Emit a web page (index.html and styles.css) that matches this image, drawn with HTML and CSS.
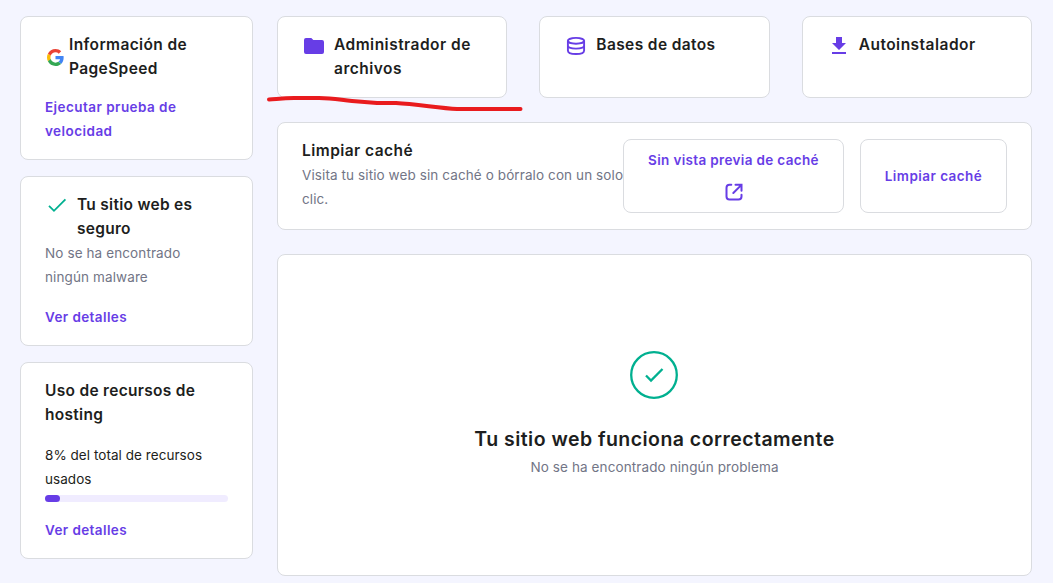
FILE: index.html
```
<!DOCTYPE html>
<html lang="es">
<head>
<meta charset="utf-8">
<title>Panel de hosting</title>
<link rel="stylesheet" href="styles.css">
</head>
<body>
<div class="dashboard">
  <aside class="sidebar">
    <section class="card pagespeed">
      <div class="heading heading-google">
        <svg class="google" viewBox="0 0 48 48"><path fill="#EA4335" d="M24 9.5c3.54 0 6.71 1.22 9.21 3.6l6.85-6.85C35.9 2.38 30.47 0 24 0 14.62 0 6.51 5.38 2.56 13.22l7.98 6.19C12.43 13.72 17.74 9.5 24 9.5z"/><path fill="#4285F4" d="M46.98 24.55c0-1.57-.15-3.09-.38-4.55H24v9.02h12.94c-.58 2.96-2.26 5.48-4.78 7.18l7.73 6c4.51-4.18 7.09-10.36 7.09-17.65z"/><path fill="#FBBC05" d="M10.53 28.59A14.5 14.5 0 0 1 9.77 24c0-1.6.27-3.14.76-4.59l-7.98-6.19A24 24 0 0 0 0 24c0 3.88.92 7.54 2.56 10.78l7.97-6.19z"/><path fill="#34A853" d="M24 48c6.48 0 11.93-2.13 15.89-5.81l-7.73-6c-2.15 1.45-4.92 2.3-8.16 2.3-6.26 0-11.57-4.22-13.47-9.91l-7.98 6.19C6.51 42.62 14.62 48 24 48z"/></svg>
        <h2 class="title">Información de<br>PageSpeed</h2>
      </div>
      <a class="link">Ejecutar prueba de<br>velocidad</a>
    </section>
    <section class="card security">
      <div class="heading">
        <svg class="icon" viewBox="0 0 24 24" fill="none" stroke="#00b090" stroke-width="1.8"><path d="M4 12.8l5 5L20.4 6.3"/></svg>
        <h2 class="title">Tu sitio web es<br>seguro</h2>
      </div>
      <p class="muted">No se ha encontrado<br>ningún malware</p>
      <a class="link">Ver detalles</a>
    </section>
    <section class="card resources">
      <h2 class="title">Uso de recursos de<br>hosting</h2>
      <p class="usage">8% del total de recursos<br>usados</p>
      <div class="meter"><div class="meter-fill" style="width: 8%"></div></div>
      <a class="link">Ver detalles</a>
    </section>
  </aside>
  <main class="content">
    <div class="tiles">
      <section class="card tile">
        <svg class="icon" viewBox="0 0 24 24" fill="#673de6"><path d="M4 5h5.3l2 2H20a2 2 0 0 1 2 2v10a2 2 0 0 1-2 2H4a2 2 0 0 1-2-2V7a2 2 0 0 1 2-2z"/></svg>
        <h2 class="title wide">Administrador de<br>archivos</h2>
      </section>
      <section class="card tile">
        <svg class="icon" viewBox="0 0 24 24" fill="none" stroke="#673de6" stroke-width="1.9"><ellipse cx="12" cy="7.8" rx="8.1" ry="2.9"/><path d="M3.9 7.8v9.6c0 2.6 3.6 3.6 8.1 3.6s8.1-1 8.1-3.6V7.8M3.9 12.6c0 2.2 3.6 3 8.1 3s8.1-.8 8.1-3"/></svg>
        <h2 class="title">Bases de datos</h2>
      </section>
      <section class="card tile">
        <svg class="icon" viewBox="0 0 24 24" fill="#673de6"><path d="M9 4h6v6h4l-7 7-7-7h4zM5 19h14v2H5z"/></svg>
        <h2 class="title wide">Autoinstalador</h2>
      </section>
      <svg class="underline" viewBox="0 0 260 18" fill="none" stroke="#e91b1e" stroke-width="4" stroke-linecap="round" stroke-linejoin="round"><path d="M4 4.5C12 4 18 3 29 3H54C68 3 76 5 87 6L112 8H131C151 9 174 13 192 14H255.5"/></svg>
    </div>
    <section class="card cache">
      <div class="cache-text">
        <h2 class="title">Limpiar caché</h2>
        <p class="muted">Visita tu sitio web sin caché o bórralo con un solo<br>clic.</p>
      </div>
      <div class="actions">
        <button class="button preview">Sin vista previa de caché
          <svg class="icon" viewBox="0 0 24 24" fill="none" stroke="#673de6" stroke-width="2" stroke-linecap="round"><path d="M9.3 4.8H7.5a3 3 0 0 0-3 3v8.7a3 3 0 0 0 3 3h9a3 3 0 0 0 3-3V14.7M13.5 4.8H19.5V10.8M19.2 5.1L11.3 13"/></svg>
        </button>
        <button class="button clear">Limpiar caché</button>
      </div>
    </section>
    <section class="card status">
      <svg class="status-icon" viewBox="0 0 48 48" fill="none" stroke="#00b090" stroke-width="2.3"><circle cx="24" cy="24" r="22.8"/><path d="M16 24.5l5 5L32.5 18"/></svg>
      <h1 class="status-title">Tu sitio web funciona correctamente</h1>
      <p class="muted status-note">No se ha encontrado ningún problema</p>
    </section>
  </main>
</div>
</body>
</html>
```
FILE: styles.css
```
* { box-sizing: border-box; }
body {
  margin: 0;
  height: 583px;
  overflow: hidden;
  background: #f4f5ff;
  color: #1d1e20;
  font-family: Inter, "Noto Sans", sans-serif;
  font-size: 14px;
  line-height: 24px;
}
h1, h2, p { margin: 0; }
.dashboard {
  display: grid;
  grid-template-columns: 233px 755px;
  gap: 24px;
  padding: 16px 0 0 20px;
}
.sidebar { display: flex; flex-direction: column; gap: 16px; }
.content { display: flex; flex-direction: column; gap: 24px; }
.card {
  background: #fff;
  border: 1px solid #dadce0;
  border-radius: 8px;
  padding: 16px 24px;
  white-space: nowrap;
}
.pagespeed { height: 144px; }
.security { height: 170px; }
.resources { height: 197px; }
.title { font-size: 15.5px; font-weight: 600; line-height: 24px; letter-spacing: 0.38px; }
.title.wide { letter-spacing: 0.48px; }
.security .title { letter-spacing: 0.28px; }
.resources .title { letter-spacing: 0.3px; }
.heading { display: flex; gap: 8px; }
.heading-google { gap: 5.5px; align-items: center; }
.google { width: 17px; height: 17px; margin-left: 1.5px; }
.icon { width: 24px; height: 24px; flex: none; display: block; }
.link { display: block; margin-top: 16px; color: #673de6; font-size: 13.5px; font-weight: 600; letter-spacing: 0.4px; }
.pagespeed .link { margin-top: 14px; letter-spacing: 0.45px; }
.muted { color: #727586; font-size: 13.5px; letter-spacing: 0.11px; }
.usage { margin-top: 16px; font-size: 13.5px; letter-spacing: 0.05px; }
.meter { height: 7px; margin-top: 4px; border-radius: 4px; background: #f0ecff; }
.meter-fill { height: 100%; border-radius: 4px; background: #673de6; }
.tiles {
  position: relative;
  display: grid;
  grid-template-columns: repeat(3, 1fr);
  gap: 32px;
  height: 82px;
}
.tile { display: flex; gap: 8px; }
.underline { position: absolute; left: -12px; top: 79px; width: 260px; height: 18px; }
.cache { display: flex; justify-content: space-between; height: 108px; }
.cache-text { width: 321px; }
.cache .title { letter-spacing: 0.45px; }
.cache .muted { letter-spacing: 0.1px; }
.actions { display: flex; gap: 16px; flex: none; }
.button {
  display: flex;
  flex-direction: column;
  align-items: center;
  justify-content: center;
  gap: 8px;
  height: 74px;
  padding: 8px 0;
  border: 1px solid #dadce0;
  border-radius: 8px;
  background: #fff;
  color: #673de6;
  font: 600 13.5px/24px Inter, "Noto Sans", sans-serif;
  letter-spacing: 0.34px;
}
.preview { width: 221px; }
.clear { width: 147px; letter-spacing: 0.45px; }
.status { display: flex; flex-direction: column; align-items: center; height: 322px; padding-top: 96px; }
.status-icon { width: 48px; height: 48px; margin-right: 1px; }
.status-title { margin: 24px 0 0; font-size: 19.5px; font-weight: 600; line-height: 32px; letter-spacing: 0.46px; }
```
